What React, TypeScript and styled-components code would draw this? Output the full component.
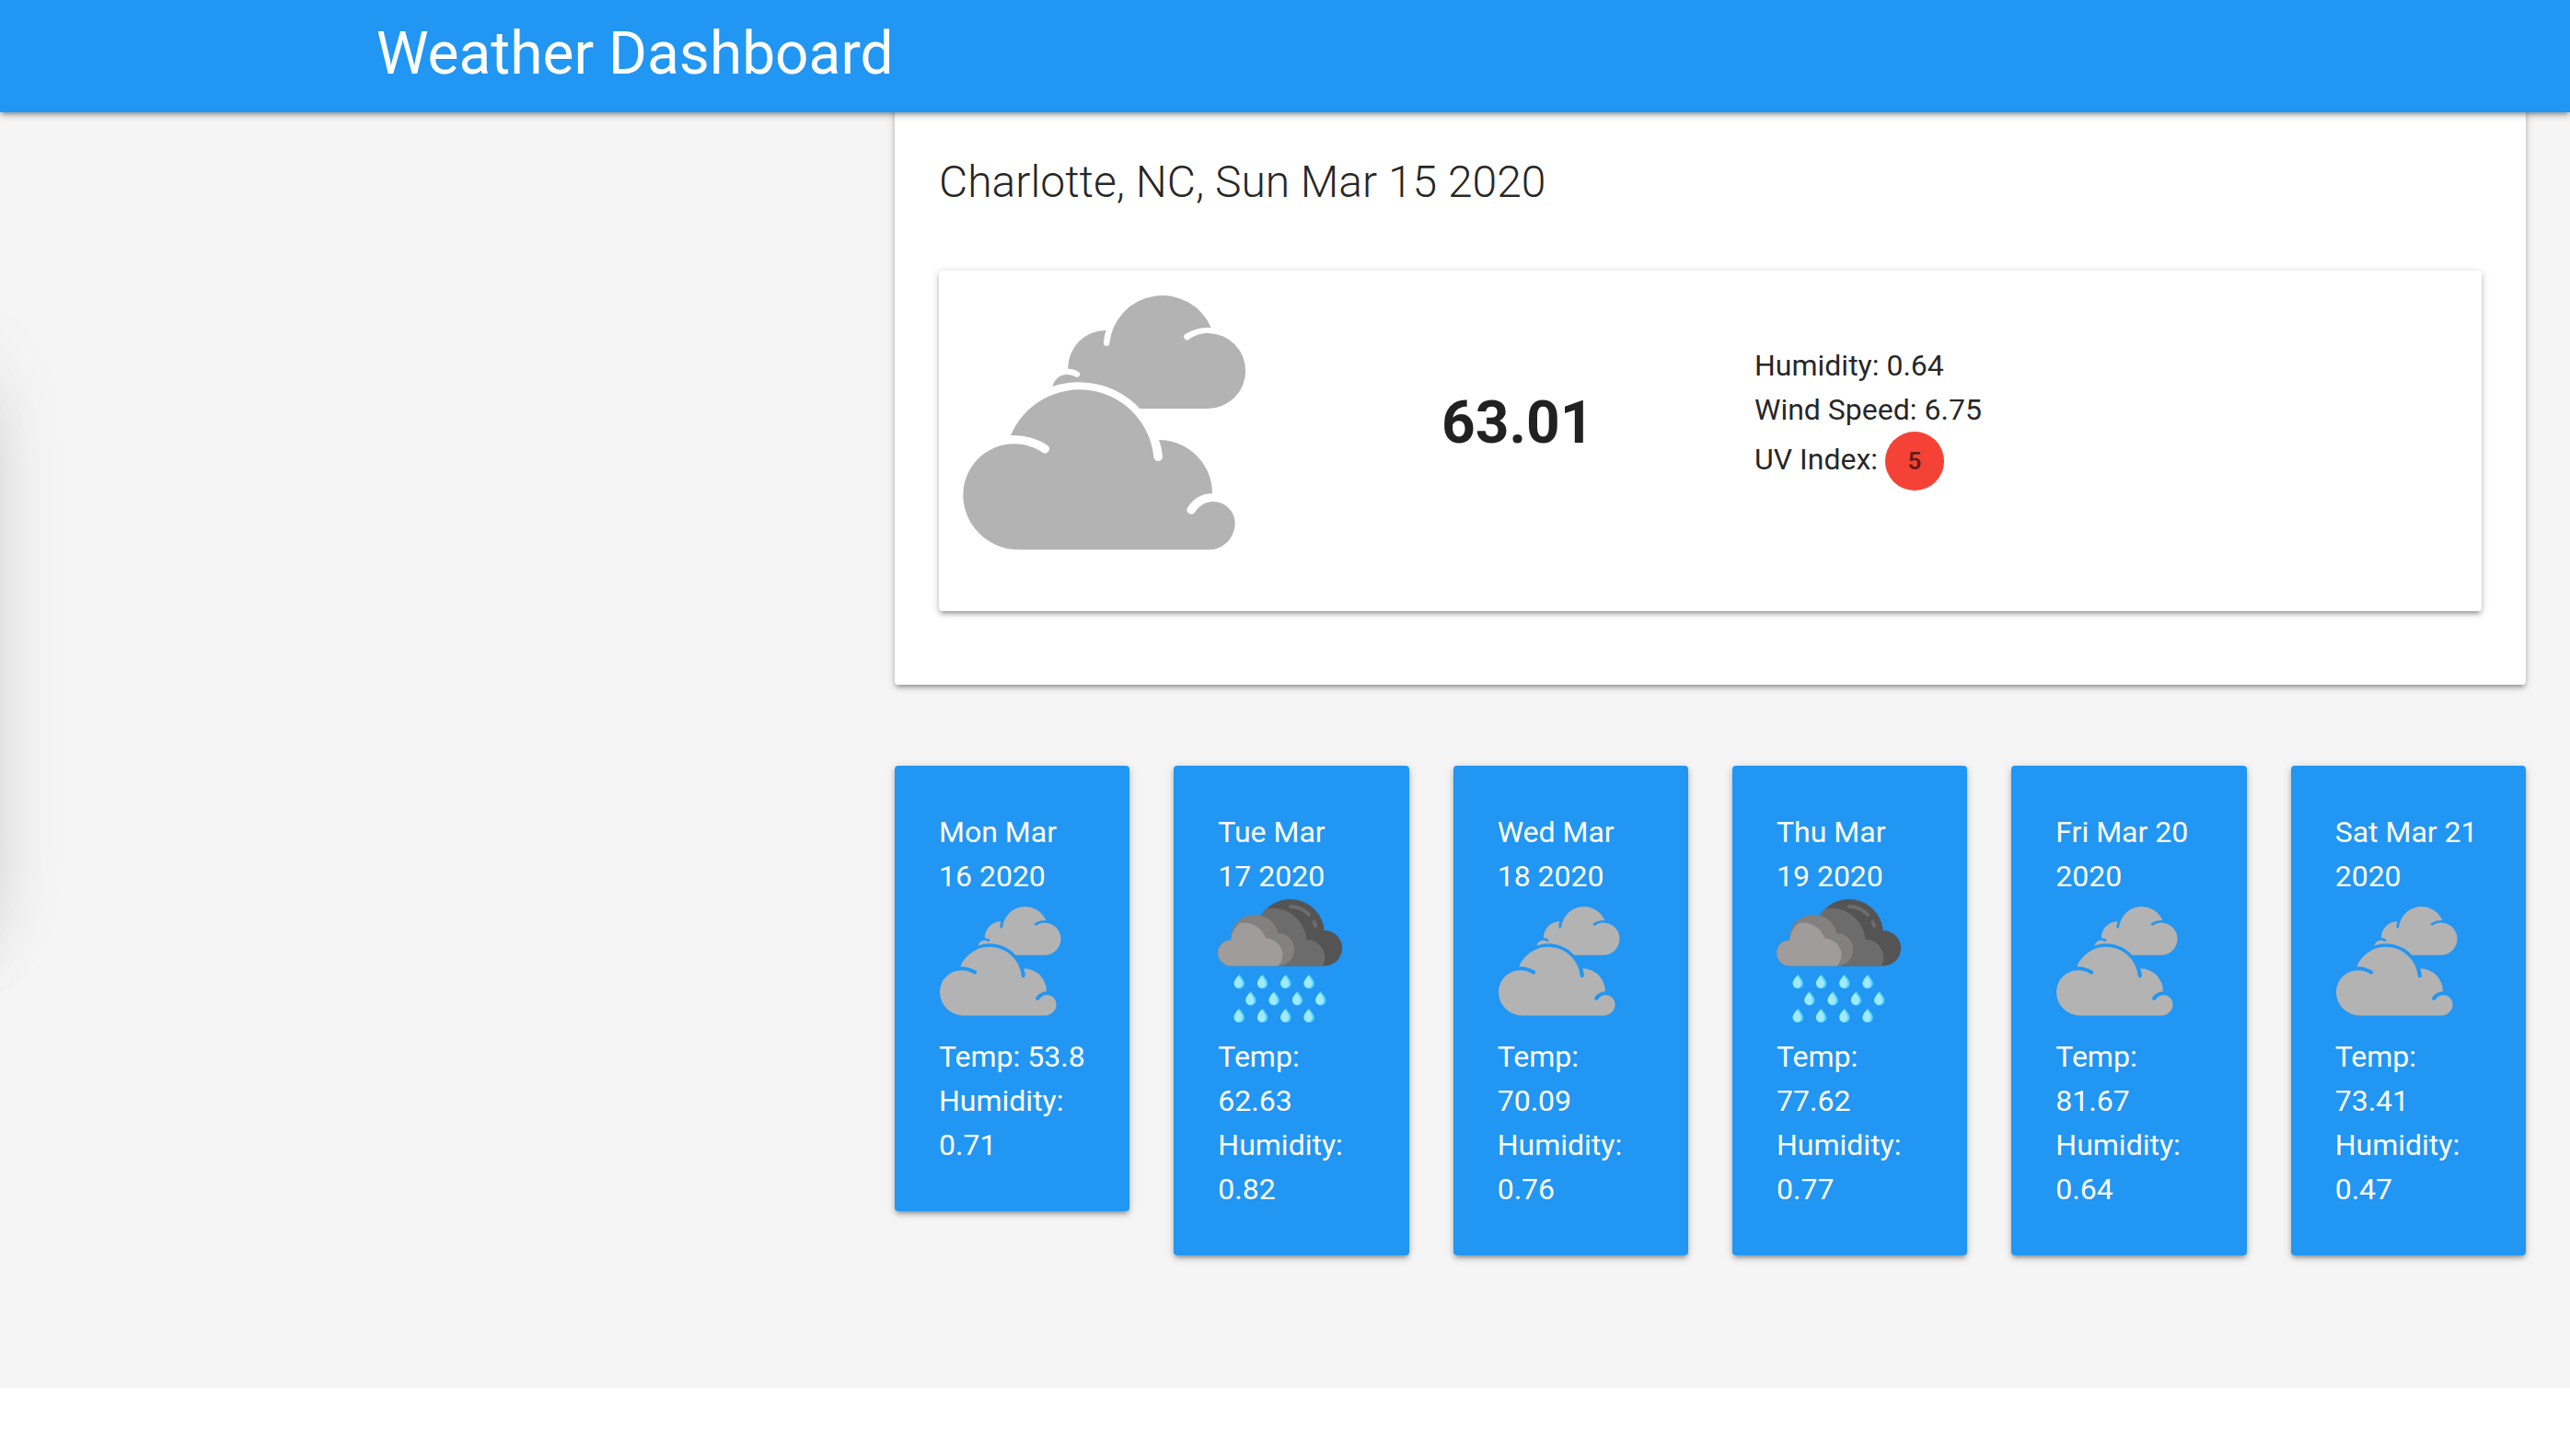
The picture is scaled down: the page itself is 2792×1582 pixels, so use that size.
import React from "react";
import styled, { createGlobalStyle } from "styled-components";

const GlobalStyle = createGlobalStyle`
  *, *::before, *::after { box-sizing: border-box; }
  body {
    margin: 0;
    background: #fff;
    color: rgba(0, 0, 0, 0.87);
    font-family: Roboto, "Liberation Sans", sans-serif;
    font-size: 32px;
    line-height: 48px;
    font-weight: 400;
  }
`;

const shadow = `
  0 4px 4px 0 rgba(0, 0, 0, 0.14),
  0 6px 2px -4px rgba(0, 0, 0, 0.12),
  0 2px 10px 0 rgba(0, 0, 0, 0.2)
`;

const Page = styled.div`
  position: relative;
  overflow: hidden;
  background: #f5f5f5;
  padding-bottom: 144px;
`;

const Header = styled.header`
  position: relative;
  z-index: 2;
  background: #2196f3;
  box-shadow: ${shadow};
  padding: 0 15% 4px calc(15% - 10px);
`;

const Brand = styled.h1`
  margin: 0;
  color: #fff;
  font-size: 64px;
  line-height: 118px;
  font-weight: 400;
  white-space: nowrap;
`;

const Columns = styled.div`
  display: grid;
  grid-template-columns: minmax(0, 1fr) minmax(0, 2fr);
  column-gap: 38px;
  padding: 0 48px;
`;

/* Drawer parked outside the left edge; only its shadow reaches the page. */
const Drawer = styled.aside`
  position: absolute;
  top: 400px;
  left: -636px;
  width: 600px;
  height: 580px;
  box-shadow:
    0 48px 76px 6px rgba(0, 0, 0, 0.14),
    0 18px 92px 16px rgba(0, 0, 0, 0.12);
`;

const Main = styled.main`
  grid-column: 2;
  display: flex;
  flex-direction: column;
  gap: 88px;
  margin-top: -8px;
`;

const Card = styled.section`
  background: #fff;
  border-radius: 4px;
  box-shadow: ${shadow};
  padding: 48px 48px 80px;
`;

const CardTitle = styled.h2`
  margin: 0 0 60px;
  font-size: 48px;
  line-height: 72px;
  font-weight: 300;
`;

const Current = styled.div`
  display: grid;
  grid-template-columns: 522fr 340fr 766fr;
  align-items: center;
  padding: 6px 24px 48px;
  border-radius: 4px;
  box-shadow: ${shadow};
`;

const Icon = styled.svg<{ $large?: boolean }>`
  display: block;
  width: ${(p) => (p.$large ? "316px" : "85%")};
  height: auto;
  aspect-ratio: 1;
  margin-bottom: ${(p) => (p.$large ? "0" : "13px")};
`;

const Temperature = styled.strong`
  padding-top: 4px;
  font-size: 64px;
  line-height: 96px;
  font-weight: 700;
`;

const Details = styled.div`
  padding-bottom: 10px;
`;

const Badge = styled.button`
  display: inline-block;
  width: 64px;
  height: 64px;
  padding: 0;
  border: 0;
  border-radius: 50%;
  background: #f44336;
  color: rgba(0, 0, 0, 0.6);
  font: inherit;
  font-size: 26px;
  line-height: 64px;
  font-weight: 600;
  text-align: center;
`;

const Forecast = styled.ul`
  display: grid;
  grid-template-columns: repeat(6, minmax(0, 1fr));
  column-gap: 48px;
  align-items: start;
  margin: 0;
  padding: 0;
  list-style: none;
`;

const Day = styled.li`
  padding: 48px;
  border-radius: 4px;
  background: #2196f3;
  color: #fff;
  box-shadow: ${shadow};
`;

function Cloudy({ large }: { large?: boolean }) {
  return (
    <Icon $large={large} viewBox="102 60 948 948" role="img" aria-label="Cloudy">
      <g fill="#b3b3b3">
        <path d="M685 492H905A123 123 0 0 0 908 246C883 246 861 254 844 267A10.5 10.5 0 0 1 832 250C856 234 886 226 917 228A173 173 0 0 0 586 278A9.5 9.5 0 0 1 567 278C567 263 571 249 575 237A122 122 0 0 0 451 362C466 362 478 366 488 374A10 10 0 0 1 477 389C469 384 458 381 447 381C424 381 406 397 400 420A271 271 0 0 1 685 492Z" />
        <path d="M290 952A181 179 0 0 1 109 773A166 166 0 0 1 275 607C309 607 341 617 368 635A14 14 0 0 0 384 612C352 590 310 578 264 579A243 243 0 0 1 730 650A14.5 14.5 0 0 0 759 647C757 628 753 610 747 594A174 174 0 0 1 921 768C884 769 857 788 840 815A14.5 14.5 0 0 0 863 832C876 810 897 795 924 795A71 71 0 0 1 995 866A86 86 0 0 1 909 952Z" />
      </g>
    </Icon>
  );
}

const drops = [
  { y: 717, xs: [260, 336, 412, 488] },
  { y: 772, xs: [298, 374, 450, 526] },
  { y: 828, xs: [260, 336, 412, 488] },
];

function Rain() {
  return (
    <Icon viewBox="190 468 407 407" role="img" aria-label="Rain">
      <path fill="#545454" d="M326 534A112 112 0 0 1 538 573A58 58 0 0 1 538 689H380Z" />
      <path fill="#6c6c6c" d="M324 540C331 522 339 510 349 501Q360 499 370 500A112 112 0 0 1 480 603A58 58 0 0 1 532 689H380Z" />
      <path fill="#82817f" d="M232 689A42 42 0 0 1 233 605A78 76 0 0 1 387 582A53.5 53.5 0 0 1 386 689Z" />
      <path fill="#a09c9b" d="M232 689A42 42 0 0 1 233 605Q236 570 262 549A76 76 0 0 1 347 599A54 54 0 0 1 388 689Z" />
      <g fill="none" stroke="#6c6c6c" strokeWidth="12" strokeLinecap="round">
        <path d="M427 495Q462 495 488 522" />
        <path d="M504 545L509 558" />
      </g>
      {drops.map((row) =>
        row.xs.map((x) => (
          <g key={`${x}-${row.y}`} transform={`translate(${x} ${row.y})`}>
            <path fill="#57d6fd" d="M0 0C6 8 17 20 17 29A17 17 0 0 1 -17 29C-17 20 -6 8 0 0Z" />
            <path fill="#a0eaff" d="M-3 4C5 14 10 21 10 30C10 38 3 44 -5 44A17 17 0 0 1 -17 29C-17 20 -8 9 -3 4Z" />
          </g>
        ))
      )}
    </Icon>
  );
}

const days = [
  { date: "Mon Mar 16 2020", rain: false, temp: "53.8", humidity: "0.71" },
  { date: "Tue Mar 17 2020", rain: true, temp: "62.63", humidity: "0.82" },
  { date: "Wed Mar 18 2020", rain: false, temp: "70.09", humidity: "0.76" },
  { date: "Thu Mar 19 2020", rain: true, temp: "77.62", humidity: "0.77" },
  { date: "Fri Mar 20 2020", rain: false, temp: "81.67", humidity: "0.64" },
  { date: "Sat Mar 21 2020", rain: false, temp: "73.41", humidity: "0.47" },
];

export default function App() {
  return (
    <>
      <GlobalStyle />
      <Page>
        <Header>
          <Brand>Weather Dashboard</Brand>
        </Header>
        <Drawer aria-hidden="true" />
        <Columns>
          <Main>
            <Card>
              <CardTitle>Charlotte, NC, Sun Mar 15 2020</CardTitle>
              <Current>
                <Cloudy large />
                <Temperature>63.01</Temperature>
                <Details>
                  <div>Humidity: 0.64</div>
                  <div>Wind Speed: 6.75</div>
                  <div>
                    UV Index: <Badge type="button">5</Badge>
                  </div>
                </Details>
              </Current>
            </Card>
            <Forecast>
              {days.map((day) => (
                <Day key={day.date}>
                  <div>{day.date}</div>
                  {day.rain ? <Rain /> : <Cloudy />}
                  <div>Temp: {day.temp}</div>
                  <div>Humidity: {day.humidity}</div>
                </Day>
              ))}
            </Forecast>
          </Main>
        </Columns>
      </Page>
    </>
  );
}
